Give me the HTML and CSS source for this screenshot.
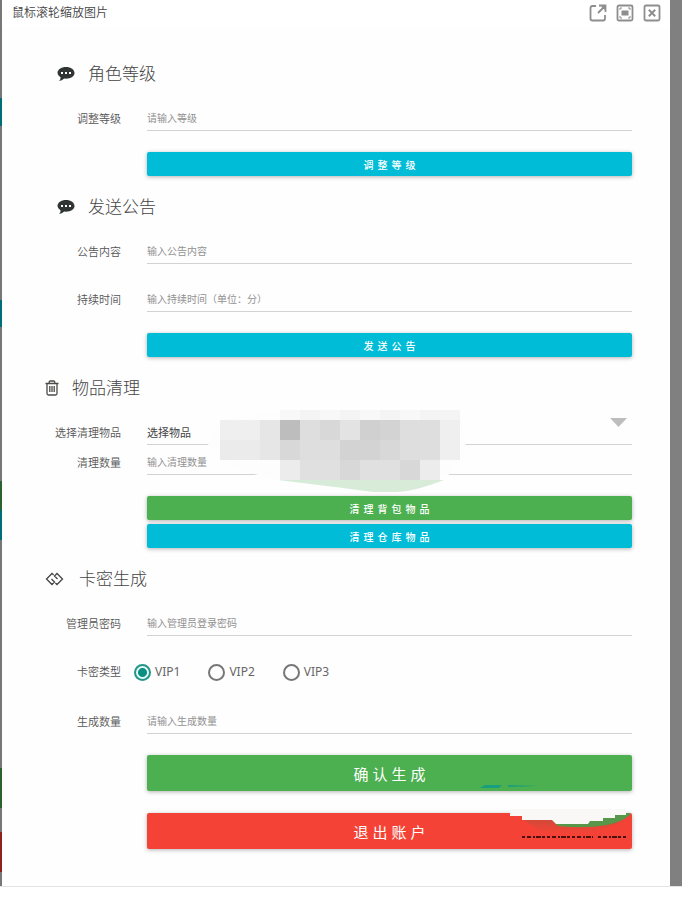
FILE: index.html
```html
<!DOCTYPE html>
<html lang="zh-CN">
<head>
<meta charset="utf-8">
<meta name="viewport" content="width=device-width, initial-scale=1">
<title>鼠标滚轮缩放图片</title>
<link rel="stylesheet" href="styles.css">
</head>
<body>
<div class="backdrop">
  <main class="viewer">
    <header class="bar">
      <h1 class="bar-title">鼠标滚轮缩放图片</h1>
      <div class="bar-tools">
        <button class="tool" type="button" aria-label="新窗口打开">
          <svg width="18" height="18" viewBox="0 0 18 18" fill="none" stroke="#8e8e8e" stroke-width="1.8"><path d="M7 2H3.500Q1.500 2 1.500 4V14.500Q1.500 16.500 3.500 16.500H14Q16 16.500 16 14.500V11"/><path d="M9 9L15.500 2.500M10 1.500H16.500V8M13 2L16 5"/></svg>
        </button>
        <button class="tool" type="button" aria-label="全屏">
          <svg width="18" height="18" viewBox="0 0 18 18" fill="none" stroke="#8e8e8e" stroke-width="1.8"><rect x="1.500" y="1.500" width="15" height="15" rx="1.500"/><path stroke-width="1" d="M4 6V4H6M12 4H14V6M14 12V14H12M6 14H4V12"/><rect x="5.500" y="6.500" width="7" height="5" fill="#8e8e8e" stroke="none"/></svg>
        </button>
        <button class="tool" type="button" aria-label="关闭">
          <svg width="18" height="18" viewBox="0 0 18 18" fill="none" stroke="#8e8e8e" stroke-width="1.8"><rect x="1.500" y="1.500" width="15" height="15" rx="1.500"/><path stroke-width="2" d="M5.800 5.800L12.200 12.200M12.200 5.800L5.800 12.200"/></svg>
        </button>
      </div>
    </header>

    <form class="panel">
      <section class="group">
        <h2 class="heading heading-inset">
          <svg width="18" height="16" viewBox="0 0 18 16"><path fill="#303534" d="M9 1C13.900 1 17.500 3.600 17.500 7S13.900 12.700 9 12.700L7.200 12.600Q5 14.900 2 15Q3.700 13.400 3.600 11.400Q.5 9.700.5 7C.5 3.600 4.100 1 9 1Z"/><path fill="#fff" d="M4 6h2v2H4zM8 6h2v2H8zM12 6h2v2h-2z"/></svg>
          角色等级
        </h2>
        <div class="row">
          <label class="label" for="level">调整等级</label>
          <input class="input" id="level" type="text" placeholder="请输入等级">
        </div>
        <div class="actions"><button class="btn cyan" type="button">调整等级</button></div>
      </section>

      <section class="group">
        <h2 class="heading heading-inset">
          <svg width="18" height="16" viewBox="0 0 18 16"><path fill="#303534" d="M9 1C13.900 1 17.500 3.600 17.500 7S13.900 12.700 9 12.700L7.200 12.600Q5 14.900 2 15Q3.700 13.400 3.600 11.400Q.5 9.700.5 7C.5 3.600 4.100 1 9 1Z"/><path fill="#fff" d="M4 6h2v2H4zM8 6h2v2H8zM12 6h2v2h-2z"/></svg>
          发送公告
        </h2>
        <div class="row">
          <label class="label" for="notice">公告内容</label>
          <input class="input" id="notice" type="text" placeholder="输入公告内容">
        </div>
        <div class="row spaced">
          <label class="label" for="duration">持续时间</label>
          <input class="input" id="duration" type="text" placeholder="输入持续时间（单位：分）">
        </div>
        <div class="actions"><button class="btn cyan" type="button">发送公告</button></div>
      </section>

      <section class="group">
        <h2 class="heading">
          <svg width="14" height="16" viewBox="0 0 14 16" fill="none" stroke="#4a4c48" stroke-width="1.300"><path d="M.5 3.500H13.500M4.200 3.300V2.200Q4.200 1 5.400 1H8.600Q9.800 1 9.800 2.200V3.300M2 3.500V13.500Q2 15 3.500 15H10.500Q12 15 12 13.500V3.500M4.800 6V12M7 6V12M9.200 6V12"/></svg>
          物品清理
        </h2>
        <div class="row">
          <label class="label" for="item">选择清理物品</label>
          <div class="select-box">
            <select class="input select" id="item"><option>选择物品</option></select>
            <svg class="mosaic" width="260" height="84" viewBox="0 0 260 84" aria-hidden="true">
              <path fill="#fdfdfd" d="M0 35L14 10L72 0H252L258 38L240 66L180 80L70 70L38 62L20 55Z"/>
              <path fill="#d8ebd9" d="M70 70H236Q205 82 188 82H165Q145 79 70 70Z"/>
              <g shape-rendering="crispEdges">
                <path fill="#f8f8f8" d="M72 0H252V10H72z"/><path fill="#f4f4f4" d="M92 0h20v10H92zM132 0h20v10h-20zM172 0h20v10h-20zM212 0h40v10h-40z"/>
                <path fill="#efefef" d="M12 10h40v20H12zM232 10h20v40h-20z"/>
                <path fill="#ebebeb" d="M12 30h40v20H12z"/>
                <path fill="#e6e6e6" d="M52 10h20v40H52z"/>
                <path fill="#bdbdbd" d="M72 10h20v20H72z"/>
                <path fill="#dedede" d="M92 10h140v40H92z"/>
                <path fill="#d8d8d8" d="M112 10h20v20h-20zM72 30h20v20H72zM172 30h20v20h-20z"/>
                <path fill="#e3e3e3" d="M132 10h20v20h-20z"/>
                <path fill="#d0d0d0" d="M152 10h20v20h-20z"/>
                <path fill="#d3d3d3" d="M172 10h20v20h-20zM132 30h40v20h-40z"/>
                <path fill="#ececec" d="M72 50h20v20H72zM212 50h20v20h-20z"/>
                <path fill="#e0e0e0" d="M92 50h40v20H92zM152 50h40v20h-40z"/>
                <path fill="#d8d8d8" d="M132 50h20v20h-20zM192 50h20v20h-20z"/>
              </g>
            </svg>
          </div>
        </div>
        <div class="row tight">
          <label class="label" for="amount">清理数量</label>
          <input class="input" id="amount" type="text" placeholder="输入清理数量">
        </div>
        <div class="actions">
          <button class="btn green" type="button">清理背包物品</button>
          <button class="btn cyan" type="button">清理仓库物品</button>
        </div>
      </section>

      <section class="group">
        <h2 class="heading heading-link">
          <svg width="19" height="14" viewBox="0 0 19 14" fill="none" stroke="#444" stroke-width="1.300"><path d="M8.600 3L7 1.500L1.500 7L7 12.500L9.500 10L6.500 7M10.400 11L12 12.500L17.500 7L12 1.500L9.500 4L12.500 7"/></svg>
          卡密生成
        </h2>
        <div class="row">
          <label class="label" for="admin">管理员密码</label>
          <input class="input" id="admin" type="text" placeholder="输入管理员登录密码">
        </div>
        <div class="row radios" role="radiogroup" aria-labelledby="type">
          <span class="label" id="type">卡密类型</span>
          <div class="choices">
            <label class="choice"><input class="radio" type="radio" name="vip" checked>VIP1</label>
            <label class="choice"><input class="radio" type="radio" name="vip">VIP2</label>
            <label class="choice"><input class="radio" type="radio" name="vip">VIP3</label>
          </div>
        </div>
        <div class="row">
          <label class="label" for="count">生成数量</label>
          <input class="input" id="count" type="text" placeholder="请输入生成数量">
        </div>
        <div class="actions large">
          <button class="btn green" type="button">确认生成</button>
          <button class="btn red" type="button">退出账户</button>
          <svg class="stamp" width="160" height="72" viewBox="0 0 160 72" aria-hidden="true">
            <defs>
              <linearGradient id="fade"><stop offset="0" stop-color="#129e82"/><stop offset=".5" stop-color="#1f9f78"/><stop offset="1" stop-color="#4caf50"/></linearGradient>
              <linearGradient id="shade" x1="0" y1="0" x2="0" y2="1"><stop offset="0" stop-color="#d04a38"/><stop offset="1" stop-color="#f44336"/></linearGradient>
            </defs>
            <path fill="url(#fade)" d="M8 11L13 8H30L27 11ZM36 8H68L60 10H36Z"/>
            <path fill="url(#shade)" d="M50 42H90L150 44Q130 55 105 56H72Z"/>
            <path fill="#58964a" d="M80 43L86 49Q112 52 135 48Q150 45 158 38V36H150L116 44Z"/>
            <path fill="#f9f8f7" d="M38 32H154V38H143V41H131V44H118L116 47H84L80 43H50V39H38Z"/>
            <path stroke="#4d1010" stroke-width="2" stroke-dasharray="3 2 4 2 2 1 5 1 3 2" d="M50 60H121M126 60H154"/>
          </svg>
        </div>
      </section>
    </form>
  </main>
</div>
</body>
</html>
```
FILE: styles.css
```css
* { box-sizing: border-box; }

body {
  margin: 0;
  background: #fff;
  color: #444;
  font-family: "Noto Sans", "Noto Sans CJK SC", sans-serif;
}

button, input, select { font-family: inherit; }

.backdrop {
  padding: 0 12px 0 2px;
  border-bottom: 1px solid #e4e4e4;
  background:
    linear-gradient(#777 98px, #006e76 98px 126px, #777 126px 300px,
      #006e76 300px 327px, #777 327px 481px, #2c622e 481px 508px,
      #006e76 512px 540px, #777 540px 768px, #2c622e 768px 808px,
      #777 808px 832px, #8d211b 832px 872px, #777 872px) left / 2px 100% no-repeat,
    #808080;
}

.viewer { background: #fefefe; }

.bar {
  display: flex;
  align-items: center;
  justify-content: space-between;
  height: 28px;
  padding: 0 9px 2px 10px;
  background: #fff;
}

.bar-title {
  margin: 0;
  color: #444;
  font-size: 12px;
  font-weight: 350;
  line-height: 24px;
}

.bar-tools { display: flex; gap: 9px; }

.tool {
  display: flex;
  padding: 0;
  border: 0;
  background: none;
}

.panel { padding: 15px 38px 37px 43px; }

.group { padding-top: 17px; }

.heading {
  display: flex;
  align-items: center;
  gap: 13px;
  margin: 0 0 18px;
  color: #444;
  font-size: 17px;
  font-weight: 300;
  line-height: 28px;
}

.heading-inset { padding-left: 12px; }
.heading-link { gap: 15px; }

.row {
  display: grid;
  grid-template-columns: 76px 1fr;
  column-gap: 26px;
  align-items: center;
}

.spaced { margin-top: 23px; }
.tight { margin-top: 5px; }

.label {
  color: #555;
  font-size: 11px;
  font-weight: 350;
  line-height: 24px;
  text-align: right;
  white-space: nowrap;
}

.input {
  width: 100%;
  height: 25px;
  padding: 0;
  border: 0;
  border-bottom: 1px solid #d2d2d2;
  border-radius: 0;
  outline: 0;
  background: transparent;
  color: #444;
  font-size: 10px;
}

.input::placeholder { color: #929292; opacity: 1; }

.select-box { position: relative; }

.select {
  display: block;
  appearance: none;
  font-size: 11px;
}

.select-box::after {
  content: "";
  position: absolute;
  top: -2px;
  right: 5px;
  width: 17px;
  height: 9px;
  background: #bdbdbd;
  clip-path: polygon(0 0, 100% 0, 50% 100%);
}

.mosaic {
  position: absolute;
  z-index: 1;
  top: -10px;
  left: 61px;
  pointer-events: none;
}

.actions {
  position: relative;
  display: grid;
  gap: 4px;
  margin: 21px 0 0 102px;
}

.btn {
  height: 24px;
  padding: 0 0 0 4px;
  border: 0;
  border-radius: 2px;
  box-shadow: 0 1px 4px rgba(0, 0, 0, .3);
  color: #fff;
  font-size: 10px;
  font-weight: 500;
  letter-spacing: 4px;
}

.large { gap: 22px; }

.large .btn {
  height: 36px;
  font-size: 15px;
  font-weight: 400;
}

.cyan { background: #00bcd7; }
.green { background: #4caf50; }
.red { background: #f44336; }

.radios { margin: 24px 0 25px; }

.choices {
  display: flex;
  gap: 28px;
  margin-left: -13px;
}

.choice {
  display: flex;
  align-items: center;
  gap: 4px;
  color: #666;
  font-size: 12px;
  line-height: 24px;
}

.radio {
  appearance: none;
  width: 17px;
  height: 17px;
  margin: 0;
  border: 2px solid #777;
  border-radius: 50%;
}

.radio:checked {
  border-color: #269488;
  background: radial-gradient(circle, #0b8f80 4px, #e0fbf8 5px);
}

.stamp {
  position: absolute;
  top: 22px;
  right: 0;
  pointer-events: none;
}
```
